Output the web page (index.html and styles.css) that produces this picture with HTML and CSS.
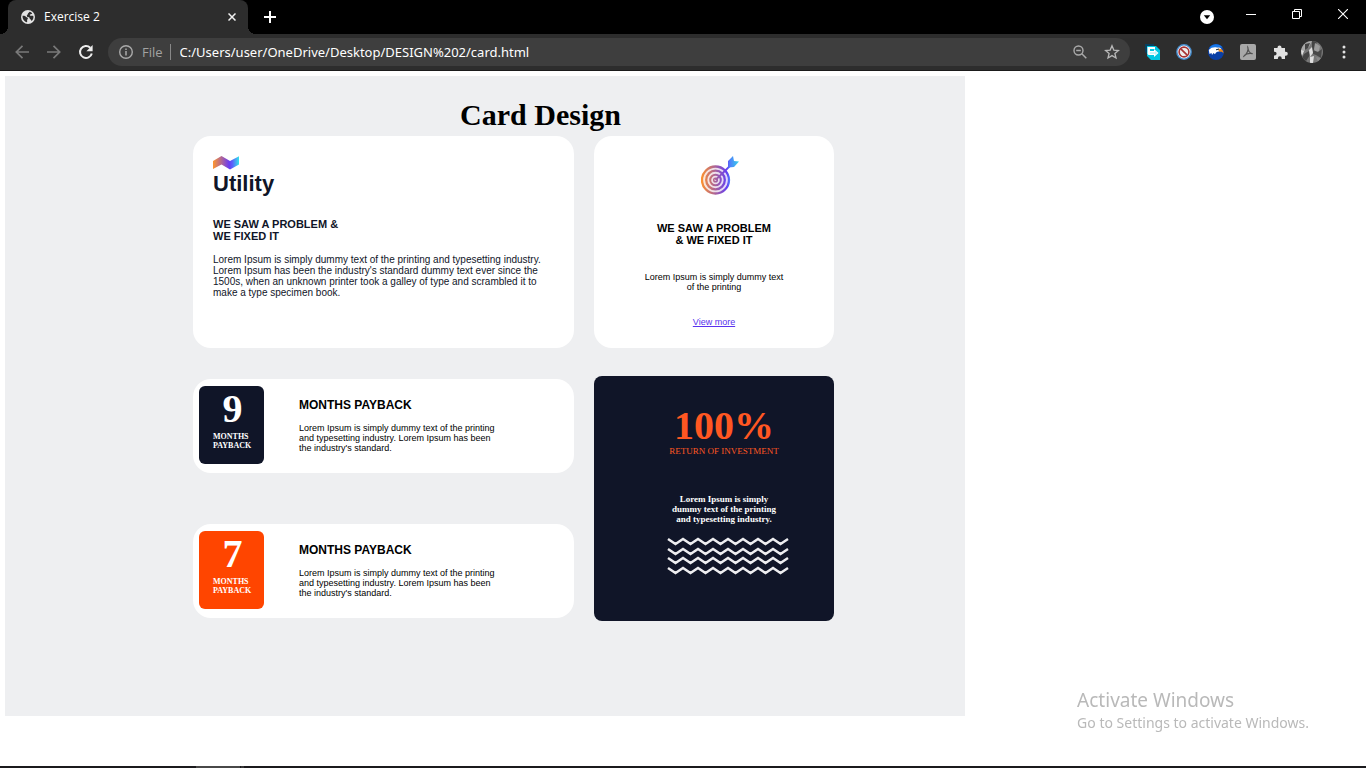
FILE: index.html
```html
<!DOCTYPE html>
<html lang="en">
<head>
<meta charset="utf-8">
<title>Exercise 2</title>
<link rel="stylesheet" href="styles.css">
</head>
<body>
<header class="browser">
  <div class="tabstrip">
    <div class="tab">
      <svg class="tab-icon" width="14" height="14" viewBox="0 0 14 14"><circle cx="7" cy="7" r="7" fill="#e3e3e3"/><path d="M1.600 5.800c1.600-.2 2.800.3 3.600 1.200.5.500 1.600.4 1.700 1.300.1.900-.9 1-.8 2 .1.900.2 1.500-.1 2C3.300 11.800 1.200 9 1.600 5.800zM8.500 1.800c1.200.2 2.100.8 2.700 1.700-.4.700-1.400.5-2 .9-.7.400-.4 1.200.3 1.300 1 .1 1.900-.3 2.800.2.500 1.900-.3 3.900-1.700 5.200-.5-.8-.5-1.500-1.300-1.800-.8-.3-.4-1.300-1-1.800-.5-.4-1.600-.3-2.200-1-.6-.8-.1-1.600.5-1.900.5-.3 0-.8.500-1.400.3-.3 1-.6 1.400-1.400z" fill="#2d2d2d"/></svg>
      <span class="tab-title">Exercise 2</span>
      <button class="tab-close" aria-label="Close tab"><svg width="8" height="8" viewBox="0 0 8 8"><path d="M.5.5l7 7M7.500.5l-7 7" stroke="#f1f1f1" stroke-width="1.500"/></svg></button>
    </div>
    <button class="new-tab" aria-label="New tab"><svg width="12" height="12" viewBox="0 0 12 12"><path d="M6 0v12M0 6h12" stroke="#fff" stroke-width="2"/></svg></button>
    <div class="window-controls">
      <button class="win-button search-tabs" aria-label="Search tabs"><svg width="14" height="14" viewBox="0 0 14 14"><circle cx="7" cy="7" r="7" fill="#fff"/><path d="M3.800 5.200h6.400L7 9.200z" fill="#000"/></svg></button>
      <button class="win-button" aria-label="Minimize"><svg width="10" height="10" viewBox="0 0 10 10"><path d="M0 5.500h10" stroke="#fff"/></svg></button>
      <button class="win-button" aria-label="Restore"><svg width="10" height="10" viewBox="0 0 10 10"><path d="M.5 2.500h7v7h-7zM2.500 2.500v-2h7v7h-2" fill="none" stroke="#fff"/></svg></button>
      <button class="win-button" aria-label="Close"><svg width="10" height="10" viewBox="0 0 10 10"><path d="M0 0l10 10M10 0L0 10" stroke="#fff" stroke-width="1.100"/></svg></button>
    </div>
  </div>
  <div class="toolbar">
    <div class="tools">
      <button class="tool" aria-label="Back"><svg width="14" height="14" viewBox="0 0 14 14"><path d="M14 7H1.500M7.500.8L1.300 7l6.200 6.200" fill="none" stroke="#797979" stroke-width="1.700"/></svg></button>
      <button class="tool" aria-label="Forward"><svg width="14" height="14" viewBox="0 0 14 14"><path d="M0 7h12.500M6.500.8L12.700 7l-6.200 6.200" fill="none" stroke="#797979" stroke-width="1.700"/></svg></button>
      <button class="tool" aria-label="Reload"><svg width="16" height="16" viewBox="0 0 16 16"><path d="M13.800 9.500A6 6 0 1 1 12.200 3.700" fill="none" stroke="#eee" stroke-width="2"/><path d="M14.600 1v6.200H8.400z" fill="#eee"/></svg></button>
    </div>
    <div class="omnibox">
      <svg class="info" width="14" height="14" viewBox="0 0 14 14"><circle cx="7" cy="7" r="6.300" fill="none" stroke="#aaa" stroke-width="1.400"/><path d="M7 6v4.500M7 3.400v1.500" stroke="#aaa" stroke-width="1.500"/></svg>
      <label class="scheme" for="address">File</label>
      <input class="address" id="address" type="text" value="C:/Users/user/OneDrive/Desktop/DESIGN%202/card.html">
      <button class="tool" aria-label="Zoom"><svg width="14" height="14" viewBox="0 0 14 14"><circle cx="5.500" cy="5.500" r="4.500" fill="none" stroke="#aaa" stroke-width="1.400"/><path d="M3.200 5.500h4.600M8.800 8.800l4.500 4.500" stroke="#aaa" stroke-width="1.500"/></svg></button>
      <button class="tool" aria-label="Bookmark"><svg width="16" height="16" viewBox="0 0 16 16"><path d="M8 1.800l1.800 4.300 4.600.4-3.500 3 1.100 4.500L8 11.600 4 14l1.100-4.500-3.500-3 4.600-.4z" fill="none" stroke="#b8b8b8" stroke-width="1.300"/></svg></button>
    </div>
    <div class="tools">
      <button class="tool" aria-label="Import extension"><svg width="16" height="16" viewBox="0 0 16 16"><path d="M1 0h9v3H4v8L1 8z" fill="#06405f"/><path d="M3 2h9l4 4v10H7l-4-4z" fill="#00c6e2"/><path d="M3.500 3H11v2H6v2h4V5l4.500 4-4.500 4v-2H4.500L3.500 10z" fill="#fff"/><path d="M6 8.200h5V7l2.300 2L11 11V9.800H6z" fill="#00c6e2" opacity=".25"/></svg></button>
      <button class="tool" aria-label="Blocker extension"><svg width="16" height="16" viewBox="0 0 16 16"><circle cx="8" cy="8" r="7.900" fill="#478dcc"/><circle cx="8" cy="8" r="6.400" fill="#fff"/><circle cx="8" cy="8" r="4.900" fill="#eee" stroke="#a63334" stroke-width="1.600"/><path d="M4.800 4.800l6.400 6.400" stroke="#a63334" stroke-width="1.700"/></svg></button>
      <button class="tool" aria-label="Eagle extension"><svg width="16" height="16" viewBox="0 0 16 16"><circle cx="8" cy="8" r="8" fill="#0a3fa5"/><path d="M1 4.500A8 8 0 0 1 14.500 3.500L9 3.500z" fill="#1878e8"/><path d="M.8 6C3 3.500 6 3 9 3.500c2.500-.3 4 .3 4.500 1.500L11 7.500c-2.500 0-3 1-4 2.800L5.500 9 4 11l-.5-2L1.500 10z" fill="#fff"/><path d="M10.500 4.800c2.800-.6 5 .7 5 4.700-.8-1.700-1.800-2-3.500-1.800-1.300 0-1.800-1.500-1.500-2.900z" fill="#f28a13"/><path d="M8 5.800l3-.8" stroke="#123" stroke-width="1"/></svg></button>
      <button class="tool" aria-label="PDF extension"><svg width="16" height="16" viewBox="0 0 16 16"><rect width="16" height="16" rx="2" fill="#a8a8a8"/><path d="M7.800 3.300c1.200 2-1.200 7.300-4 9 .4-1.600 4.800-3.700 8.800-2.600C10 9.800 7.700 6.500 7.800 3.300z" fill="none" stroke="#505050" stroke-width="1.200"/></svg></button>
      <button class="tool" aria-label="Extensions"><svg width="15" height="15" viewBox="0 0 15 15"><path d="M1 3h3.500V2.400a2 2 0 0 1 4 0V3H12v3.800h.8a2 2 0 0 1 0 4H12V14H8.700v-.8a1.900 1.900 0 0 0-3.800 0v.8H1v-3.500h.7a1.900 1.900 0 0 0 0-3.800H1z" fill="#e2e2e2"/></svg></button>
      <button class="tool" aria-label="Profile"><svg width="22" height="22" viewBox="0 0 22 22"><defs><clipPath id="avatar"><circle cx="11" cy="11" r="11"/></clipPath></defs><g clip-path="url(#avatar)"><path d="M0 0h22v22H0z" fill="#777"/><path d="M0 0h11l-3 6-4 3-4 5z" fill="#a8a8a8"/><path d="M4 3l5-1-2 5-3 2zM11 0h5l-2 8-3 2zM3 13l5-3 1 4-4 6-4-3z" fill="#444"/><path d="M14 2l5 3-1 5-4 2-1-4z" fill="#9c9c9c"/><path d="M12 9l5 2 4-3-1 9-5-3-3-1z" fill="#484848"/><path d="M8 9l3-3 1 6-3 4zM9 16l4-1-1 7-3 0zM0 9l3 1-2 5z" fill="#dedede"/><path d="M15 16l5 1-3 4z" fill="#888"/></g></svg></button>
      <button class="tool" aria-label="Menu"><svg width="4" height="14" viewBox="0 0 4 14"><circle cx="2" cy="2" r="1.500" fill="#e2e2e2"/><circle cx="2" cy="7" r="1.500" fill="#e2e2e2"/><circle cx="2" cy="12" r="1.500" fill="#e2e2e2"/></svg></button>
    </div>
  </div>
</header>

<main class="page">
  <section class="design">
    <h1 class="design-title">Card Design</h1>
    <div class="cards">
      <article class="card utility">
        <svg class="utility-logo" width="26" height="14" viewBox="0 0 26 14"><defs><linearGradient id="brand"><stop offset="0" stop-color="#ff962e"/><stop offset=".62" stop-color="#6a3cf2"/><stop offset=".75" stop-color="#5964fa"/><stop offset="1" stop-color="#34e4ea"/></linearGradient></defs><path d="M0 5L8.500 0 17 5 26 .300v8.200L17 13.500 8.500 8.500 0 13z" fill="url(#brand)"/></svg>
        <h2 class="utility-name">Utility</h2>
        <h3 class="card-heading">WE SAW A PROBLEM &amp;<br>WE FIXED IT</h3>
        <p class="utility-text">Lorem Ipsum is simply dummy text of the printing and typesetting industry.<br>Lorem Ipsum has been the industry's standard dummy text ever since the<br>1500s, when an unknown printer took a galley of type and scrambled it to<br>make a type specimen book.</p>
      </article>
      <article class="card goal">
        <svg class="goal-icon" width="38" height="40" viewBox="0 0 38 40"><defs><linearGradient id="ring" gradientUnits="userSpaceOnUse" x1="0" y1="20" x2="38" y2="20"><stop offset="0" stop-color="#ff922b"/><stop offset=".68" stop-color="#643df3"/><stop offset=".76" stop-color="#5080fa"/><stop offset="1" stop-color="#35d2eb"/></linearGradient></defs><circle cx="14.500" cy="24" r="14" fill="url(#ring)" opacity=".2"/><g fill="none" stroke="url(#ring)"><circle cx="14.500" cy="24" r="13.500" stroke-width="2.300"/><circle cx="14.500" cy="24" r="9.300" stroke-width="2.300"/><circle cx="14.500" cy="24" r="5.300" stroke-width="2"/><circle cx="14.500" cy="24" r="1.800" stroke-width="1.500"/><path d="M14.500 24L30 9" stroke-width="1.800"/></g><path d="M27 11.500V5l5-5 1 5 5 .500-5 5.500z" fill="url(#ring)"/></svg>
        <h3 class="card-heading">WE SAW A PROBLEM<br>&amp; WE FIXED IT</h3>
        <p class="small-text">Lorem Ipsum is simply dummy text<br>of the printing</p>
        <a class="more" href="#">View more</a>
      </article>
      <div class="paybacks">
        <article class="card payback">
          <div class="badge"><strong class="badge-number">9</strong><span class="badge-label">MONTHS<br>PAYBACK</span></div>
          <div class="payback-body">
            <h3 class="payback-heading">MONTHS PAYBACK</h3>
            <p class="small-text">Lorem Ipsum is simply dummy text of the printing<br>and typesetting industry. Lorem Ipsum has been<br>the industry's standard.</p>
          </div>
        </article>
        <article class="card payback">
          <div class="badge badge-orange"><strong class="badge-number">7</strong><span class="badge-label">MONTHS<br>PAYBACK</span></div>
          <div class="payback-body">
            <h3 class="payback-heading">MONTHS PAYBACK</h3>
            <p class="small-text">Lorem Ipsum is simply dummy text of the printing<br>and typesetting industry. Lorem Ipsum has been<br>the industry's standard.</p>
          </div>
        </article>
      </div>
      <article class="returns">
        <strong class="returns-number">100%</strong>
        <span class="returns-label">RETURN OF INVESTMENT</span>
        <p class="returns-text">Lorem Ipsum is simply<br>dummy text of the printing<br>and typesetting industry.</p>
        <svg class="waves" width="122" height="40" viewBox="0 0 122 40"><defs><path id="wave" d="M1 2l7.500 5 7.500-5 7.500 5 7.500-5 7.500 5 7.500-5 7.500 5 7.500-5 7.500 5 7.500-5 7.500 5 7.500-5 7.500 5 7.500-5 7.500 5 7.500-5"/></defs><g fill="none" stroke="#ededf0" stroke-width="2.500"><use href="#wave"/><use href="#wave" y="10"/><use href="#wave" y="19"/><use href="#wave" y="29"/></g></svg>
      </article>
    </div>
  </section>
</main>

<aside class="watermark">
  <p class="watermark-title">Activate Windows</p>
  <p class="watermark-text">Go to Settings to activate Windows.</p>
</aside>
<footer class="taskbar"><span class="task"></span><span class="task-more"></span></footer>
</body>
</html>
```
FILE: styles.css
```css
* { box-sizing: border-box; }
body {
  margin: 0;
  min-height: 100vh;
  display: flex;
  flex-direction: column;
  background: #fff;
  color: #000;
  font-family: "Liberation Sans", Arial, sans-serif;
}
h1, h2, h3, p { margin: 0; }
svg { display: block; flex: none; }
button { border: 0; padding: 0; background: none; display: flex; align-items: center; justify-content: center; }

.browser { font-family: "Open Sans", sans-serif; border-bottom: 1px solid #1b1b1b; }
.tabstrip { display: flex; height: 34px; padding-left: 8px; background: #000; }
.tab {
  position: relative;
  display: flex;
  align-items: center;
  width: 240px;
  padding: 0 12px 0 13px;
  border-radius: 8px 8px 0 0;
  background: #2d2d2d;
  color: #fff;
}
.tab::before, .tab::after {
  content: "";
  position: absolute;
  bottom: 0;
  width: 8px;
  height: 8px;
}
.tab::before { left: -8px; background: radial-gradient(circle at 0 0, #000 8px, #2d2d2d 8px); }
.tab::after { right: -8px; background: radial-gradient(circle at 100% 0, #000 8px, #2d2d2d 8px); }
.tab-title { margin-left: 9px; flex: 1; font-size: 12px; line-height: 16px; }
.new-tab { width: 44px; }
.window-controls { display: flex; height: 28px; margin-left: auto; }
.win-button { width: 46px; }
.search-tabs { width: 42px; height: 34px; }
.toolbar { display: flex; align-items: center; gap: 6px; height: 36px; padding: 0 6px; background: #2d2d2d; }
.tools { display: flex; }
.tool { width: 32px; height: 28px; }
.omnibox {
  display: flex;
  align-items: center;
  flex: 1;
  height: 28px;
  padding: 0 2px 0 11px;
  border-radius: 14px;
  background: #3e3e3e;
}
.scheme { margin-left: 9px; padding-right: 7px; border-right: 1px solid #888; color: #a2a2a2; font-size: 13px; line-height: 16px; }
.address { flex: 1; min-width: 0; padding: 0 0 0 9px; border: 0; outline: 0; background: none; color: #fff; font: 13px/16px "Noto Sans", sans-serif; }

.page { flex: 1; padding: 5px; }
.design { max-width: 960px; min-height: 640px; padding: 19px 0 20px 188px; background: #eeeff1; }
.design-title { max-width: 695px; margin-bottom: 1px; font: bold 30px/40px "Liberation Serif", serif; text-align: center; }
.cards {
  display: grid;
  grid-template-columns: minmax(0, 381px) minmax(0, 240px);
  grid-template-rows: 212px auto;
  gap: 28px 20px;
}
.card { border-radius: 18px; background: #fff; }
.card-heading { font-size: 11px; line-height: 12px; }
.small-text { font-size: 9px; line-height: 10px; }
.utility { padding: 20px; color: #101528; }
.utility-name { font-size: 22px; line-height: 28px; }
.utility .card-heading { margin-top: 20px; }
.utility-text { margin-top: 12px; font-size: 10px; line-height: 11px; white-space: nowrap; }
.goal { display: flex; flex-direction: column; align-items: center; padding: 20px; text-align: center; }
.goal-icon { margin-left: 12px; }
.goal .card-heading { margin-top: 26px; }
.goal .small-text { margin-top: 26px; }
.more { margin-top: 24px; color: #5832ee; font-size: 9px; line-height: 12px; }
.paybacks { display: flex; flex-direction: column; justify-content: space-between; padding: 3px 0; }
.payback { display: flex; padding: 7px 6px 9px; }
.badge { width: 65px; padding: 6px 12px 14px 14px; border-radius: 6px; background: #101528; color: #fff; font-family: "Liberation Serif", serif; }
.badge-number { display: block; margin-bottom: 6px; text-align: center; font-size: 40px; line-height: 34px; }
.badge-label { display: block; font-size: 8px; font-weight: bold; line-height: 9px; white-space: nowrap; }
.badge-orange { background: #ff4500; }
.payback-body { padding: 12px 0 0 35px; }
.payback-heading { font-size: 12px; line-height: 14px; }
.payback .small-text { margin-top: 11px; white-space: nowrap; }
.returns {
  display: flex;
  flex-direction: column;
  align-items: center;
  min-height: 245px;
  padding: 30px 0 20px 20px;
  border-radius: 8px;
  background: #101528;
  color: #fff;
  font-family: "Liberation Serif", serif;
  text-align: center;
}
.returns-number { color: #ff5722; font-size: 40px; line-height: 40px; }
.returns-label { color: #ff5722; font-size: 9px; line-height: 10px; }
.returns-text { margin-top: 38px; font-size: 9px; font-weight: bold; line-height: 10px; }
.waves { margin: 13px 0 0 8px; }

.watermark { position: fixed; right: 57px; bottom: 35px; color: #b9b9b9; font-family: "Noto Sans", sans-serif; }
.watermark-title { font-size: 19px; line-height: 26px; }
.watermark-text { font-size: 14px; line-height: 20px; }
.taskbar { display: flex; height: 2px; padding-left: 196px; background: #1b1a1d; }
.task { width: 44px; background: #484848; }
.task-more { width: 3px; margin-left: 1px; background: #383838; }
```
